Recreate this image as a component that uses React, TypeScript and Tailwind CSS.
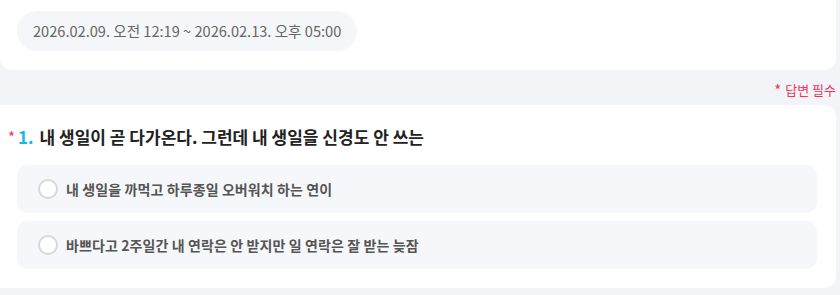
export default function App() {
  const font = { fontFamily: '"Noto Sans CJK KR", "Noto Sans", sans-serif' };
  return (
    <div className="w-[840px] h-[295px] bg-[#f3f4f8] overflow-hidden" style={font}>
      <div className="w-[836px] bg-white rounded-b-[12px] pt-[11px] pb-[19px] pl-[17px]">
        <div className="inline-flex items-center h-[40px] px-[16px] rounded-full bg-[#f5f6f9] text-[14.6px] text-[#666] whitespace-nowrap">
          2026.02.09. 오전 12:19 ~ 2026.02.13. 오후 05:00
        </div>
      </div>
      <div className="w-[836px] flex justify-end h-[35px] pt-[10px] text-[13px] leading-[20px] text-[#f5335a]">
        <span className="mr-[4px] text-[15px]">*</span>답변 필수
      </div>
      <div className="w-[836px] bg-white rounded-r-[12px] pt-[18px] pb-[19px]">
        <div className="flex items-center pl-[8px] h-[28px] text-[17px] font-bold text-[#222]">
          <span className="text-[#f5335a] text-[15px] mr-[3px] font-normal">*</span>
          <span className="text-[#19b6e6] mr-[6px]">1.</span>
          내 생일이 곧 다가온다. 그런데 내 생일을 신경도 안 쓰는
        </div>
        <div className="flex flex-col gap-[8px] px-[17px] mt-[14px] w-[834px]">
          {["내 생일을 까먹고 하루종일 오버워치 하는 연이", "바쁘다고 2주일간 내 연락은 안 받지만 일 연락은 잘 받는 늦잠"].map((t) => (
            <div key={t} className="flex items-center h-[48px] rounded-[10px] bg-[#f6f7fa] pl-[21px]">
              <span className="w-[20px] h-[20px] rounded-full border-2 border-[#d6d8dd] bg-white mr-[8px] shrink-0" />
              <span className="text-[14px] font-semibold text-[#555] tracking-[0.1px]">{t}</span>
            </div>
          ))}
        </div>
      </div>
    </div>
  );
}
